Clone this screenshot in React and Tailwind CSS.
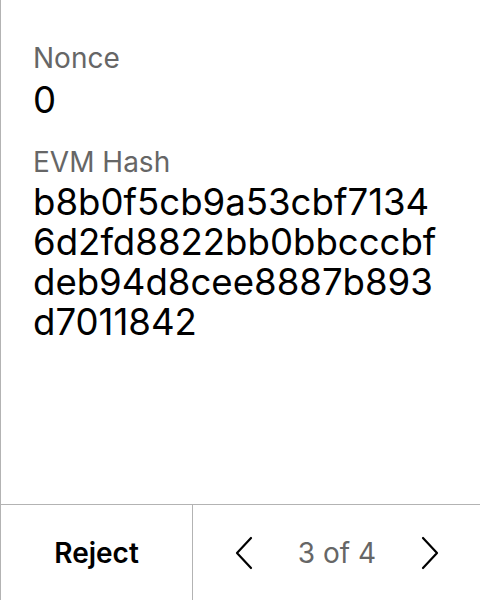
function Chevron({ dir }) {
  const d = dir === 'left' ? 'M16 2 L2 17 L16 32' : 'M2 2 L16 17 L2 32'
  return (
    <svg width="18" height="34" viewBox="0 0 18 34" fill="none" stroke="currentColor" strokeWidth="2.2" strokeLinecap="round" strokeLinejoin="round">
      <path d={d} />
    </svg>
  )
}

export default function App() {
  return (
    <div className="h-screen w-[480px] flex flex-col bg-white border-l border-[#b3b3b3] font-['Inter',sans-serif] text-black">
      <div className="flex-1 pl-8 pr-3 pt-[42px]">
        <div className="text-[28px] leading-[32px] text-[#666666]">Nonce</div>
        <div className="text-[36.6px] leading-[40px] mt-[6px]">0</div>
        <div className="text-[28px] leading-[32px] text-[#666666] mt-[26px]">EVM Hash</div>
        <div className="text-[36.6px] leading-[40px] mt-[4px] whitespace-nowrap">
          b8b0f5cb9a53cbf7134
          <br />
          6d2fd8822bb0bbcccbf
          <br />
          deb94d8cee8887b893
          <br />
          d7011842
        </div>
      </div>
      <div className="h-[96px] flex border-t border-[#b3b3b3]">
        <button className="w-[192px] flex items-center justify-center text-[28px] font-semibold border-r border-[#b3b3b3]">
          Reject
        </button>
        <div className="flex-1 flex items-center justify-between pl-[42px] pr-[41px]">
          <Chevron dir="left" />
          <span className="text-[28px] text-[#666666]">3 of 4</span>
          <Chevron dir="right" />
        </div>
      </div>
    </div>
  )
}
